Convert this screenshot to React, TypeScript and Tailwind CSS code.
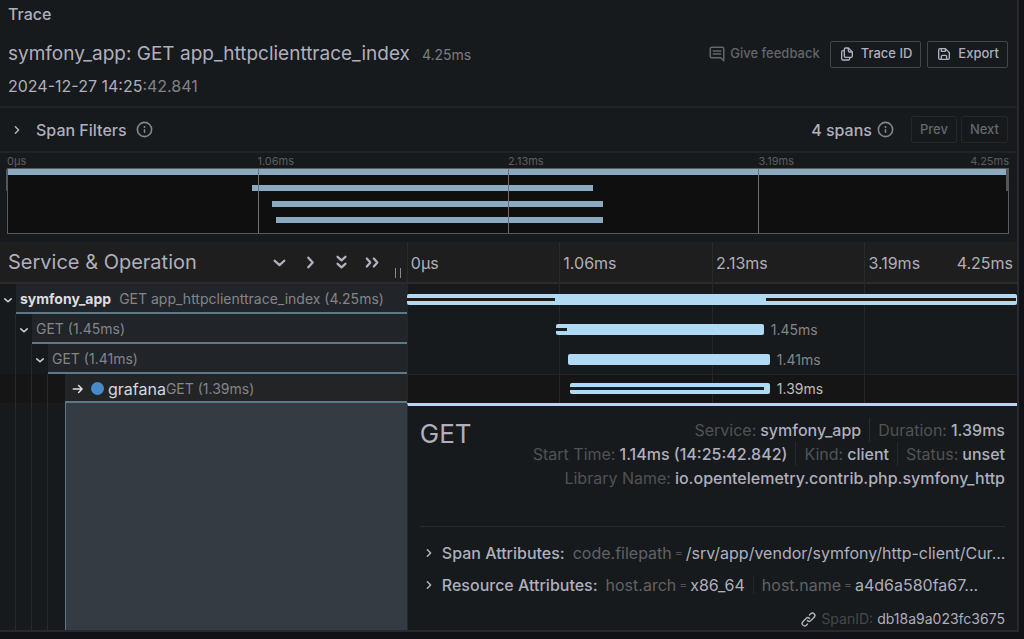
import type { ReactNode } from 'react';

const ICONS = {
  angleRight:
    'M14.83,11.29,10.59,7.05a1,1,0,0,0-1.42,0,1,1,0,0,0,0,1.41L12.71,12,9.17,15.54a1,1,0,0,0,0,1.41,1,1,0,0,0,.71.29,1,1,0,0,0,.71-.29l4.24-4.24A1,1,0,0,0,14.83,11.29Z',
  info:
    'M12,2A10,10,0,1,0,22,12,10,10,0,0,0,12,2Zm0,18a8,8,0,1,1,8-8A8,8,0,0,1,12,20Zm0-8.5a1,1,0,0,0-1,1v3a1,1,0,0,0,2,0v-3A1,1,0,0,0,12,11.5Zm0-4a1.25,1.25,0,1,0,1.25,1.25A1.25,1.25,0,0,0,12,7.5Z',
  link:
    'M10,17.55,8.23,19.27a2.47,2.47,0,0,1-3.5-3.5l4.54-4.55a2.46,2.46,0,0,1,3.39-.09l.12.1a1,1,0,0,0,1.4-1.43A2.75,2.75,0,0,0,14,9.59a4.46,4.46,0,0,0-6.09.22L3.31,14.36a4.48,4.48,0,0,0,6.33,6.33L11.37,19A1,1,0,0,0,10,17.55ZM20.69,3.31a4.49,4.49,0,0,0-6.33,0L12.63,5A1,1,0,0,0,14,6.45l1.73-1.72a2.47,2.47,0,0,1,3.5,3.5l-4.54,4.55a2.46,2.46,0,0,1-3.39.09l-.12-.1a1,1,0,0,0-1.4,1.43,2.75,2.75,0,0,0,.23.21,4.47,4.47,0,0,0,6.09-.22l4.55-4.55A4.49,4.49,0,0,0,20.69,3.31Z',
  save:
    'M20.71,9.29l-6-6a1,1,0,0,0-.32-.21A1.09,1.09,0,0,0,14,3H6A3,3,0,0,0,3,6V18a3,3,0,0,0,3,3H18a3,3,0,0,0,3-3V10A1,1,0,0,0,20.71,9.29ZM9,5h4V7H9Zm6,14H9V16a1,1,0,0,1,1-1h4a1,1,0,0,1,1,1Zm4-1a1,1,0,0,1-1,1H17V16a3,3,0,0,0-3-3H10a3,3,0,0,0-3,3v3H6a1,1,0,0,1-1-1V6A1,1,0,0,1,6,5H7V8A1,1,0,0,0,8,9h6a1,1,0,0,0,1-1V6.41l4,4Z',
  copy:
    'M21,8.94a1.31,1.31,0,0,0-.06-.27l0-.09a1.07,1.07,0,0,0-.19-.28h0l-6-6h0a1.07,1.07,0,0,0-.28-.19.32.32,0,0,0-.09,0A.88.88,0,0,0,14.05,2H10A3,3,0,0,0,7,5V6H6A3,3,0,0,0,3,9V19a3,3,0,0,0,3,3h8a3,3,0,0,0,3-3V18h1a3,3,0,0,0,3-3V9S21,9,21,8.94ZM15,5.41,17.59,8H16a1,1,0,0,1-1-1ZM15,19a1,1,0,0,1-1,1H6a1,1,0,0,1-1-1V9A1,1,0,0,1,6,8H7v7a3,3,0,0,0,3,3h5Zm4-4a1,1,0,0,1-1,1H10a1,1,0,0,1-1-1V5a1,1,0,0,1,1-1h3V7a3,3,0,0,0,3,3h3Z',
  comment:
    'M17,7H7A1,1,0,0,0,7,9H17a1,1,0,0,0,0-2Zm0,4H7a1,1,0,0,0,0,2H17a1,1,0,0,0,0-2Zm2-9H5A3,3,0,0,0,2,5V15a3,3,0,0,0,3,3H16.59l3.7,3.71A1,1,0,0,0,21,22a.84.84,0,0,0,.38-.08A1,1,0,0,0,22,21V5A3,3,0,0,0,19,2Zm1,16.59-2.29-2.3A1,1,0,0,0,17,16H5a1,1,0,0,1-1-1V5A1,1,0,0,1,5,4H19a1,1,0,0,1,1,1Z',
};

const STROKES = {
  down: 'M6.5 10l5.5 5 5.5-5',
  right: 'M9.5 6.5l5 5.5-5 5.5',
  doubleDown: 'M7.5 5.5l4.5 4 4.5-4M7.5 13.5l4.5 4 4.5-4',
  doubleRight: 'M5.5 7.5l4 4.5-4 4.5M13.5 7.5l4 4.5-4 4.5',
  arrow: 'M4 12h15M13 6l6 6-6 6',
};

const TICKS = ['0μs', '1.06ms', '2.13ms', '3.19ms'];
const TOTAL = '4.25ms';

type Span = {
  service?: string;
  name: string;
  depth: number;
  start: number;
  width: number;
  label?: string;
  critical: { left: number; width: number }[];
  selected?: boolean;
};

// start, width and critical ranges are percentages (critical is relative to the bar)
const SPANS: Span[] = [
  {
    service: 'symfony_app',
    name: 'GET app_httpclienttrace_index (4.25ms)',
    depth: 0,
    start: 0,
    width: 100,
    critical: [{ left: 0, width: 24.3 }, { left: 58.8, width: 41 }],
  },
  { name: 'GET (1.45ms)', depth: 1, start: 24.4, width: 34.1, label: '1.45ms', critical: [{ left: 0, width: 5.5 }] },
  { name: 'GET (1.41ms)', depth: 2, start: 26.4, width: 33.1, label: '1.41ms', critical: [] },
  { name: 'GET (1.39ms)', depth: 3, start: 26.8, width: 32.7, label: '1.39ms', critical: [{ left: 0, width: 97 }], selected: true },
];

export default function App() {
  return (
    <div className="min-h-screen bg-[#111217] pr-[5px] pb-2 font-['Inter',sans-serif] text-[#ccccdc]/85">
      <main className="border-r-2 border-b-2 border-[#28292c] bg-[#171a1c]">
        <TraceHeader />
        <SpanFilters />
        <Minimap />
        <TimelineHeader />
        {SPANS.map((span) => (
          <SpanRow key={span.depth} span={span} />
        ))}
        <SpanDetail />
      </main>
    </div>
  );
}

function TraceHeader() {
  return (
    <header className="border-b-2 border-[#212427] pr-[9px] pl-2">
      <h2 className="pt-0.5 text-base leading-6 font-medium">Trace</h2>
      <div className="flex items-center justify-between pt-3.5">
        <h1 className="text-[19px] leading-7">
          symfony_app: GET app_httpclienttrace_index
          <small className="ml-3 text-sm text-[#7c7c7f]">4.25ms</small>
        </h1>
        <div className="flex items-center gap-1.5">
          <a href="#feedback" className="mr-1 flex items-center gap-1 text-[13px] font-medium text-[#63646c]">
            <Icon name="comment" size={18} />
            Give feedback
          </a>
          <Button icon={<Icon name="copy" size={16} />}>Trace ID</Button>
          <Button icon={<Icon name="save" size={16} />}>Export</Button>
        </div>
      </div>
      <p className="pt-1.5 pb-2 text-base leading-6">
        2024-12-27 14:25<span className="text-[#828286]">:42.841</span>
      </p>
    </header>
  );
}

function SpanFilters() {
  return (
    <section className="flex items-center border-b-2 border-[#212427] py-2 pr-[9px] pl-2">
      <button className="flex items-center gap-2.5 text-base leading-6 font-medium">
        <Icon name="angleRight" size={18} />
        Span Filters
      </button>
      <span className="ml-2 text-[#85858a]">
        <Icon name="info" size={19} />
      </span>
      <span className="mr-1 ml-auto text-base leading-6 font-medium">4 spans</span>
      <span className="mr-4 text-[#85858a]">
        <Icon name="info" size={19} />
      </span>
      <div className="flex gap-1">
        <Button disabled>Prev</Button>
        <Button disabled>Next</Button>
      </div>
    </section>
  );
}

function Minimap() {
  return (
    <section className="pt-px pr-2 pb-2 pl-[7px]">
      <div className="flex text-[11px] leading-[14px] text-[#5c5d60]">
        {TICKS.map((tick, i) => (
          <span key={tick} className="flex-1">
            {tick}
            {i === 3 && <span className="float-right">{TOTAL}</span>}
          </span>
        ))}
      </div>
      <div className="relative border border-[#5a5a5a] bg-[#0f0f0f] pb-2.5">
        {SPANS.map((span) => (
          <div key={span.depth} className="mb-2.5 last-of-type:mb-0">
            <div
              className="h-1.5 bg-[#8caabf]"
              style={{ marginLeft: `${span.start}%`, width: `${span.depth ? span.width : 99.8}%` }}
            />
          </div>
        ))}
        <i className="absolute inset-y-0 left-1/4 w-px bg-[#707070]" />
        <i className="absolute inset-y-0 left-1/2 w-px bg-[#707070]" />
        <i className="absolute inset-y-0 left-3/4 w-px bg-[#707070]" />
        <i className="absolute top-0 -left-0.5 h-[22px] w-0.5 bg-[#555]" />
        <i className="absolute top-0 -right-px h-[22px] w-[3px] bg-[#555]" />
      </div>
    </section>
  );
}

function TimelineHeader() {
  return (
    <div className="flex border-b-2 border-[#2c2c2e] bg-[#1e1e1e]">
      <div className="relative flex w-2/5 items-center justify-between pr-6 pl-2">
        <h3 className="text-xl leading-10">Service &amp; Operation</h3>
        <div className="flex items-center gap-2.5">
          <button aria-label="Collapse one level"><Stroke name="down" size={21} /></button>
          <button aria-label="Expand one level"><Stroke name="right" size={21} /></button>
          <button aria-label="Collapse all"><Stroke name="doubleDown" size={21} /></button>
          <button aria-label="Expand all"><Stroke name="doubleRight" size={21} /></button>
        </div>
        <i className="absolute right-1.5 bottom-1 h-2.5 w-1.5 border-x border-[#8a8a8a]" />
      </div>
      <div className="flex flex-1 text-base leading-10">
        {TICKS.map((tick, i) => (
          <div key={tick} className="-mb-0.5 flex flex-1 justify-between border-l border-[#2a2a2b] pt-px pr-1 pl-[3px]">
            <span>{tick}</span>
            {i === 3 && <span>{TOTAL}</span>}
          </div>
        ))}
      </div>
    </div>
  );
}

function Guides({ count }: { count: number }) {
  return (
    <>
      {Array.from({ length: count }, (_, i) => (
        <span key={i} className="w-4 shrink-0 self-stretch border-r border-[#28292b]" />
      ))}
    </>
  );
}

function SpanRow({ span }: { span: Span }) {
  return (
    <div className={`flex ${span.selected ? 'h-[29px] bg-[#151515]' : 'h-[30px]'}`}>
      <div className="flex w-2/5 items-center">
        <Guides count={span.depth} />
        {span.selected ? (
          <span className="w-[17px] shrink-0" />
        ) : (
          <button
            aria-label="Toggle children"
            className="flex w-4 shrink-0 items-center justify-center self-stretch pt-0.5 text-[#d0d0d4]"
          >
            <Stroke name="down" size={14} />
          </button>
        )}
        <div
          className={`flex h-full flex-1 items-center border-b-2 border-[#5d7887] pt-0.5 pl-1 text-sm whitespace-nowrap ${
            span.selected ? 'bg-[#222426]' : 'bg-[#212428]'
          }`}
        >
          {span.service && <strong className="mr-2 font-bold text-[#dcdce0]">{span.service}</strong>}
          {span.selected && (
            <>
              <span className="ml-0.5 text-[#e0e0e4]"><Stroke name="arrow" size={14} /></span>
              <i className="mr-1 ml-1.5 size-[13px] rounded-full bg-[#478bca]" />
              <span className="text-base text-[#d8d8dc]">grafana</span>
            </>
          )}
          <span className="text-[#858589]">{span.name}</span>
        </div>
      </div>
      <div className={`relative flex flex-1 ${span.selected ? 'border-t border-[#242424]' : ''}`}>
        {TICKS.map((tick) => (
          <span key={tick} className="flex-1 border-l border-[#252627]" />
        ))}
        <div
          className={`absolute h-[11px] rounded-xs bg-[#b0daf3] ${span.selected ? 'top-2' : 'top-2.5'}`}
          style={{ left: `${span.start}%`, width: `${span.width}%` }}
        >
          {span.critical.map((part) => (
            <i
              key={part.left}
              className="absolute top-1 h-[3px] bg-[#1c1c1c]"
              style={{ left: `${part.left}%`, width: `${part.width}%` }}
            />
          ))}
          {span.label && (
            <span
              className={`absolute -top-1 left-full ml-[7px] text-sm leading-5 ${
                span.selected ? 'text-[#bdbdbd]' : 'text-[#858589]'
              }`}
            >
              {span.label}
            </span>
          )}
        </div>
      </div>
    </div>
  );
}

function SpanDetail() {
  return (
    <div className="flex">
      <div className="flex w-2/5">
        <Guides count={3} />
        <span className="w-[17px]" />
        <div className="flex-1 border-l border-[#5d7887] bg-[#343b43]" />
      </div>
      <div className="w-3/5 border-t-[3px] border-l border-[#b0daf3] border-l-[#28292b] px-3">
        <div className="flex justify-between border-b border-[#282a2d] pt-3 pb-9">
          <h2 className="text-[26px] leading-8">GET</h2>
          <div className="text-base leading-6">
            <div className="flex justify-end">
              <Fact label="Service:" value="symfony_app" />
              <Fact label="Duration:" value="1.39ms" last />
            </div>
            <div className="flex justify-end">
              <Fact label="Start Time:" value="1.14ms (14:25:42.842)" />
              <Fact label="Kind:" value="client" />
              <Fact label="Status:" value="unset" last />
            </div>
            <div className="flex justify-end">
              <Fact label="Library Name:" value="io.opentelemetry.contrib.php.symfony_http" last />
            </div>
          </div>
        </div>
        <div className="-mr-2 pt-2.5">
          <Attributes title="Span Attributes:">
            <Attribute name="code.filepath" value="/srv/app/vendor/symfony/http-client/Cur..." />
          </Attributes>
          <Attributes title="Resource Attributes:">
            <Attribute name="host.arch" value="x86_64" />
            <i className="mx-2 h-4.5 w-px bg-[#25282b]" />
            <Attribute name="host.name" value="a4d6a580fa67..." />
          </Attributes>
        </div>
        <div className="flex items-center justify-end pt-2 pb-px text-sm leading-5">
          <button aria-label="Copy link to span" className="mr-1"><Icon name="link" size={17} /></button>
          <span className="mr-1 text-[#45474b]">SpanID:</span>
          <span>db18a9a023fc3675</span>
        </div>
      </div>
    </div>
  );
}

function Fact({ label, value, last = false }: { label: string; value: string; last?: boolean }) {
  return (
    <div className={`flex gap-1 ${last ? '' : 'mr-2 border-r border-[#282a2d] pr-2'}`}>
      <span className="text-[#505256]">{label}</span>
      <span className="font-medium">{value}</span>
    </div>
  );
}

function Attributes({ title, children }: { title: string; children: ReactNode }) {
  return (
    <button className="flex h-8 w-full items-center text-base whitespace-nowrap">
      <Icon name="angleRight" size={18} />
      <span className="mr-2 ml-1 font-medium">{title}</span>
      {children}
    </button>
  );
}

function Attribute({ name, value }: { name: string; value: string }) {
  return (
    <span className="flex items-center gap-[3px]">
      <span className="text-[#606267]">{name}</span>
      <span className="text-xs text-[#505256]">=</span>
      <span>{value}</span>
    </span>
  );
}

function Button({ icon, disabled = false, children }: { icon?: ReactNode; disabled?: boolean; children: ReactNode }) {
  return (
    <button
      disabled={disabled}
      className={`flex h-[27px] items-center gap-1.5 rounded-xs border px-2 text-[13px] font-medium ${
        disabled ? 'border-[#25282b] text-[#65666e]' : 'border-[#434549]'
      }`}
    >
      {icon}
      {children}
    </button>
  );
}

function Icon({ name, size }: { name: keyof typeof ICONS; size: number }) {
  return (
    <svg width={size} height={size} viewBox="0 0 24 24" fill="currentColor" className="shrink-0">
      <path d={ICONS[name]} />
    </svg>
  );
}

function Stroke({ name, size }: { name: keyof typeof STROKES; size: number }) {
  return (
    <svg
      width={size}
      height={size}
      viewBox="0 0 24 24"
      fill="none"
      stroke="currentColor"
      strokeWidth={2.6}
      strokeLinecap="round"
      strokeLinejoin="round"
      className="shrink-0"
    >
      <path d={STROKES[name]} />
    </svg>
  );
}
